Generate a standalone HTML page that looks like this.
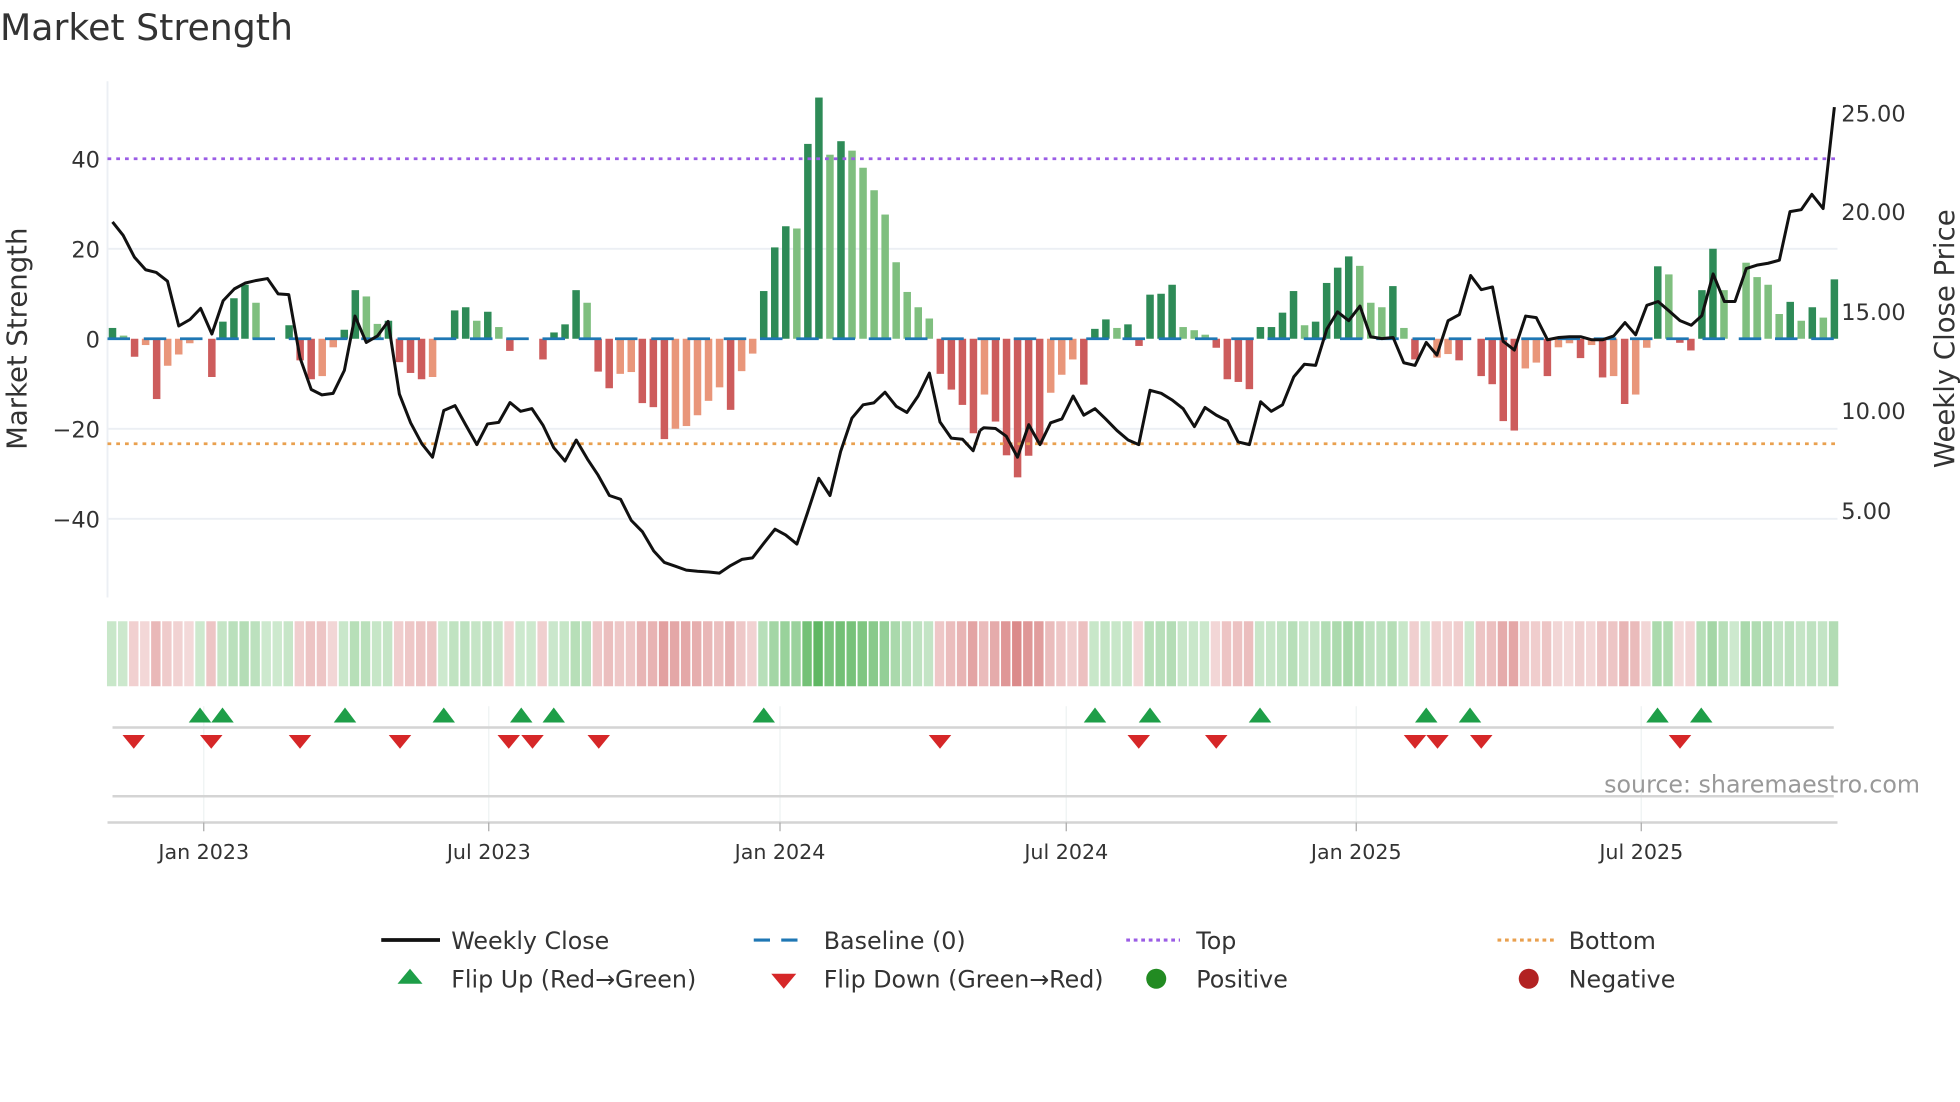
<!DOCTYPE html>
<html><head><meta charset="utf-8"><style>
html,body{margin:0;padding:0;background:#fff;width:1960px;height:1102px;overflow:hidden}
svg{display:block}
text{font-family:"DejaVu Sans","Liberation Sans",sans-serif;fill:#333}
</style></head><body>
<svg id="s" width="1960" height="1102" viewBox="0 0 1568 881.6" xmlns="http://www.w3.org/2000/svg">
<text x="0" y="32" font-size="29">Market Strength</text>
<g stroke="#eceff4" stroke-width="1.5">
<line x1="86" y1="199" x2="1470" y2="199"/><line x1="86" y1="343" x2="1470" y2="343"/><line x1="86" y1="415" x2="1470" y2="415"/>
</g>
<line x1="86" y1="65" x2="86" y2="478" stroke="#eceff4" stroke-width="1.5"/>
<g font-size="18" text-anchor="end">
<text x="80" y="134">40</text><text x="80" y="206">20</text><text x="80" y="278">0</text><text x="80" y="350">−20</text><text x="80" y="422">−40</text>
</g>
<g font-size="18">
<text x="1473" y="97">25.00</text><text x="1473" y="176">20.00</text><text x="1473" y="256">15.00</text><text x="1473" y="335">10.00</text><text x="1473" y="415">5.00</text>
</g>
<text transform="translate(21,271) rotate(-90)" font-size="22" text-anchor="middle">Market Strength</text>
<text transform="translate(1563,271) rotate(-90)" font-size="22" text-anchor="middle">Weekly Close Price</text>
<g id="bars"></g>
<line x1="86" y1="271" x2="1470" y2="271" stroke="#1f77b4" stroke-width="2.2" stroke-dasharray="18,11"/>
<line x1="86" y1="127" x2="1470" y2="127" stroke="#9b5de5" stroke-width="2.2" stroke-dasharray="3,4"/>
<line x1="86" y1="355" x2="1470" y2="355" stroke="#e9a04f" stroke-width="2.2" stroke-dasharray="3,4"/>
<g transform="scale(0.5,0.3061)" fill="none" stroke="#111" stroke-width="3" stroke-linejoin="round">
<polyline vector-effect="non-scaling-stroke" points="180,580 197,615 215,672 233,705 250,712 268,735 286,852 304,835 321,806 339,873 357,786 375,755 392,740 410,733 428,728 445,768 462,770 480,935 498,1018 515,1032 533,1028 551,968 568,826 586,895 604,878 621,840 639,1030 657,1105 675,1160 692,1195 710,1073 728,1060 745,1110 763,1162 780,1108 798,1104 816,1052 833,1075 851,1068 869,1112 886,1170 904,1205 922,1150 940,1200 957,1242 975,1295 993,1305 1010,1360 1028,1390 1046,1440 1063,1470 1081,1480 1098,1490 1116,1493 1134,1495 1151,1498 1169,1478 1187,1462 1204,1458 1222,1420 1240,1383 1257,1398 1275,1422 1292,1340 1310,1250 1328,1295 1345,1180 1363,1093 1381,1058 1398,1053 1416,1025 1434,1062 1451,1078 1469,1035 1487,975 1504,1103 1522,1145 1540,1148 1557,1178 1568,1125"/>
<polyline vector-effect="non-scaling-stroke" transform="translate(1568,0)" points="0,1125 6,1118 25,1120 42,1140 60,1195 78,1110 96,1162 113,1105 131,1095 149,1035 166,1085 184,1068 201,1095 219,1125 237,1150 254,1162 272,1020 290,1028 307,1045 325,1068 343,1115 360,1065 378,1085 396,1100 413,1155 431,1162 449,1050 466,1075 484,1058 502,985 519,952 537,955 555,860 572,815 590,838 608,800 625,880 643,885 661,882 678,948 696,955 714,895 731,928 749,838 767,822 785,720 802,757 820,750 837,892 855,915 873,826 890,830 908,888 926,882 943,880 961,880 979,888 996,888 1014,878 1032,843 1049,875 1067,798 1085,788 1102,812 1120,838 1138,850 1155,825 1173,716 1191,788 1208,788 1226,702 1243,693 1261,688 1279,680 1296,553 1314,548 1331,508 1349,545 1367,280"/>
</g>
<g id="heat"></g>
<g stroke="#eef2f2" stroke-width="1"><line x1="163" y1="565" x2="163" y2="658"/><line x1="391" y1="565" x2="391" y2="658"/><line x1="624" y1="565" x2="624" y2="658"/><line x1="853" y1="565" x2="853" y2="658"/><line x1="1085" y1="565" x2="1085" y2="658"/><line x1="1313" y1="565" x2="1313" y2="658"/></g>
<line x1="90" y1="582" x2="1467" y2="582" stroke="#d4d4d4" stroke-width="2"/>
<line x1="90" y1="637" x2="1467" y2="637" stroke="#d4d4d4" stroke-width="2"/>
<line x1="86" y1="658" x2="1470" y2="658" stroke="#d4d4d4" stroke-width="2"/>
<g id="flips"></g>
<text x="1536" y="634" font-size="19" text-anchor="end" style="fill:#999">source: sharemaestro.com</text>
<g stroke="#aaa" stroke-width="1"><line x1="163" y1="658" x2="163" y2="665"/><line x1="391" y1="658" x2="391" y2="665"/><line x1="624" y1="658" x2="624" y2="665"/><line x1="853" y1="658" x2="853" y2="665"/><line x1="1085" y1="658" x2="1085" y2="665"/><line x1="1313" y1="658" x2="1313" y2="665"/></g>
<g font-size="16.5" text-anchor="middle">
<text x="163" y="687">Jan 2023</text><text x="391" y="687">Jul 2023</text><text x="624" y="687">Jan 2024</text><text x="853" y="687">Jul 2024</text><text x="1085" y="687">Jan 2025</text><text x="1313" y="687">Jul 2025</text>
</g>
<g font-size="19">
<line x1="305" y1="752" x2="352" y2="752" stroke="#111" stroke-width="3"/><text x="361" y="759">Weekly Close</text>
<line x1="603" y1="752" x2="646" y2="752" stroke="#1f77b4" stroke-width="2.5" stroke-dasharray="13,9"/><text x="659" y="759">Baseline (0)</text>
<line x1="901" y1="752" x2="944" y2="752" stroke="#9b5de5" stroke-width="2.5" stroke-dasharray="3,3"/><text x="957" y="759">Top</text>
<line x1="1198" y1="752" x2="1243" y2="752" stroke="#e9a04f" stroke-width="2.5" stroke-dasharray="3,3"/><text x="1255" y="759">Bottom</text>
<polygon points="328,775 338,787 318,787" fill="#1e9e48"/><text x="361" y="790">Flip Up (Red→Green)</text>
<polygon points="617,779 637,779 627,791" fill="#d62728"/><text x="659" y="790">Flip Down (Green→Red)</text>
<circle cx="925" cy="783" r="8" fill="#228b22"/><text x="957" y="790">Positive</text>
<circle cx="1223" cy="783" r="8" fill="#b22222"/><text x="1255" y="790">Negative</text>
</g>
</svg>
<script>
var D=[[2.4,'G'],[0.7,'g'],[-4,'R'],[-1.4,'r'],[-13.4,'R'],[-6,'r'],[-3.5,'r'],[-1,'r'],[0,'g'],[-8.5,'R'],[3.8,'G'],[9,'G'],[12,'G'],[8,'g'],[0,'g'],[0,'g'],[3,'G'],[-4.8,'R'],[-9,'R'],[-8.3,'r'],[-1.9,'r'],[2,'G'],[10.8,'G'],[9.4,'g'],[3.3,'g'],[4,'G'],[-5.2,'R'],[-7.6,'R'],[-9,'R'],[-8.5,'r'],[0,'g'],[6.3,'G'],[7,'G'],[4,'g'],[6,'G'],[2.6,'g'],[-2.7,'R'],[0,'g'],[0,'g'],[-4.6,'R'],[1.4,'G'],[3.2,'G'],[10.8,'G'],[8,'g'],[-7.3,'R'],[-11,'R'],[-7.8,'r'],[-7.4,'r'],[-14.3,'R'],[-15.2,'R'],[-22.3,'R'],[-20,'r'],[-19.4,'r'],[-17,'r'],[-13.8,'r'],[-10.8,'r'],[-15.8,'R'],[-7.2,'r'],[-3.3,'r'],[10.6,'G'],[20.3,'G'],[25,'G'],[24.5,'g'],[43.3,'G'],[53.6,'G'],[40.9,'g'],[43.9,'G'],[41.8,'g'],[38,'g'],[33,'g'],[27.6,'g'],[17,'g'],[10.4,'g'],[7,'g'],[4.5,'g'],[-7.8,'R'],[-11.3,'R'],[-14.7,'R'],[-21,'R'],
[-12.4,'r'],[-18.4,'R'],[-25.9,'R'],[-30.8,'R'],[-26,'R'],[-23.5,'R'],[-12,'r'],[-8,'r'],[-4.6,'r'],[-10.2,'R'],[2.2,'G'],[4.3,'G'],[2.4,'g'],[3.2,'G'],[-1.6,'R'],[9.8,'G'],[10,'G'],[12,'G'],[2.6,'g'],[1.9,'g'],[0.9,'g'],[-2,'R'],[-9,'R'],[-9.6,'R'],[-11.2,'R'],[2.6,'G'],[2.6,'G'],[5.8,'G'],[10.6,'G'],[3,'g'],[3.8,'G'],[12.4,'G'],[15.8,'G'],[18.3,'G'],[16.2,'g'],[8,'g'],[7,'g'],[11.7,'G'],[2.4,'g'],[-4.6,'R'],[0,'g'],[-4.2,'r'],[-3.4,'r'],[-4.8,'R'],[0,'g'],[-8.3,'R'],[-10.1,'R'],[-18.3,'R'],[-20.4,'R'],[-6.6,'r'],[-5.3,'r'],[-8.3,'R'],[-1.9,'r'],[-1,'r'],[-4.3,'R'],[-1.4,'r'],[-8.6,'R'],[-8.3,'r'],[-14.5,'R'],[-12.4,'r'],[-2,'r'],[16.1,'G'],[14.3,'g'],[-0.9,'R'],[-2.6,'R'],[10.8,'G'],[20,'G'],[10.8,'g'],[0,'g'],[16.9,'g'],[13.7,'g'],[12,'g'],[5.5,'g'],[8.2,'G'],[4,'g'],[7,'G'],[4.7,'g'],[13.2,'G']];
var C={G:'#2e8b57',g:'#7fbf7f',R:'#cd5c5c',r:'#e9967a'};
var NS='http://www.w3.org/2000/svg',n=D.length,step=(1467.5-90)/(n-1);
var bars=document.getElementById('bars'),heat=document.getElementById('heat');
function el(t,a,p){var e=document.createElementNS(NS,t);for(var k in a)e.setAttribute(k,a[k]);p.appendChild(e);return e;}
for(var i=0;i<n;i++){var v=D[i][0],x=90+i*step;
 if(v!==0){var h=Math.abs(v)*3.6;el('rect',{x:x-3,y:v>0?271-h:271,width:6,height:h,fill:C[D[i][1]]},bars);}
 var col,a;
 if(v>=0){a=0.28+0.62*Math.min(v/54,1);col='rgba(76,175,80,'+a+')';}
 else{a=0.22+0.5*Math.min(-v/31,1);col='rgba(205,92,92,'+a+')';}
 el('rect',{x:x-step/2,y:497,width:step-1.3,height:52,fill:col},heat);}
var fl=document.getElementById('flips');
[160,178,276,355,417,443,611,876,920,1008,1141,1176,1326,1361].forEach(function(x){el('polygon',{points:(x)+',566 '+(x+9)+',578 '+(x-9)+',578',fill:'#1e9e48'},fl);});
[107,169,240,320,407,426,479,752,911,973,1132,1150,1185,1344].forEach(function(x){el('polygon',{points:(x-9)+',588 '+(x+9)+',588 '+x+',599',fill:'#d62728'},fl);});
</script>
</body></html>
